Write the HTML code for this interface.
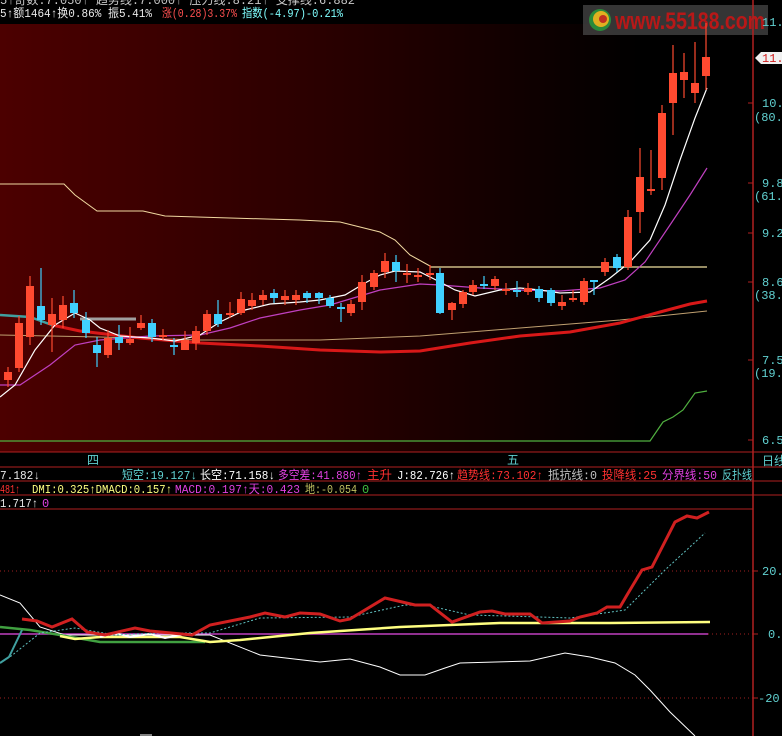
<!DOCTYPE html>
<html><head><meta charset="utf-8"><style>
html,body{margin:0;padding:0;background:#000;width:782px;height:736px;overflow:hidden}
svg{display:block}
text{font-family:"Liberation Mono","WenQuanYi Zen Hei",monospace;font-size:12px}
.cj{font-family:"Liberation Mono","Noto Sans CJK SC",monospace}
</style></head><body>
<svg width="782" height="736" viewBox="0 0 782 736" xmlns="http://www.w3.org/2000/svg">
<defs>
<linearGradient id="bg" x1="0" y1="0" x2="1" y2="0">
<stop offset="0" stop-color="#4c0000"/><stop offset="0.45" stop-color="#280000"/><stop offset="0.85" stop-color="#000"/>
</linearGradient>
</defs>
<rect x="0" y="24" width="753" height="428" fill="url(#bg)"/>
<text x="0" y="4" fill="#c8c8c8" textLength="355" lengthAdjust="spacingAndGlyphs">5↑奇数:7.050↑ 趋势线:7.000↑ 压力线:8.21↑ 支撑线:6.882</text>
<text x="0" y="17" fill="#e8e8e8" class="cj" textLength="152" lengthAdjust="spacingAndGlyphs">5↑额1464↑换0.86% 振5.41%</text>
<text x="162" y="17" fill="#ff5050" class="cj" textLength="75" lengthAdjust="spacingAndGlyphs">涨(0.28)3.37%</text>
<text x="242" y="17" fill="#80ffff" class="cj" textLength="101" lengthAdjust="spacingAndGlyphs">指数(-4.97)-0.21%</text>
<rect x="583" y="5" width="185" height="30" fill="#6a6a6a" opacity="0.5"/>
<circle cx="600" cy="20" r="11" fill="#2a8a3a"/><circle cx="601" cy="19" r="8" fill="#e0b020"/><circle cx="603" cy="19" r="4" fill="#c03020"/>
<text x="615" y="29" fill="#b81818" style="font-size:24px;font-weight:bold;font-family:'Liberation Sans',sans-serif" textLength="150" lengthAdjust="spacingAndGlyphs">www.55188.com</text>
<line x1="753" y1="0" x2="753" y2="736" stroke="#b02020" stroke-width="1.5"/>
<g fill="#60d0d0">
<text x="762" y="26">11.</text>
<text x="762" y="107">10.9</text><text x="754" y="121">(80.9</text>
<text x="762" y="187">9.8</text><text x="754" y="200">(61.8</text>
<text x="762" y="237">9.2</text>
<text x="762" y="286">8.6</text><text x="754" y="299">(38.2</text>
<text x="762" y="364">7.5</text><text x="754" y="377">(19.1</text>
<text x="762" y="444">6.5</text>
</g>
<g stroke="#b02020"><line x1="748" y1="103" x2="753" y2="103"/><line x1="748" y1="183" x2="753" y2="183"/><line x1="748" y1="233" x2="753" y2="233"/><line x1="748" y1="282" x2="753" y2="282"/><line x1="748" y1="360" x2="753" y2="360"/><line x1="748" y1="440" x2="753" y2="440"/></g>
<path d="M755 58 L761 52 L782 52 L782 64 L761 64 Z" fill="#f0f0f0"/>
<text x="762" y="62" fill="#d02020">11.5</text>
<polyline fill="none" stroke="#f0d8a0" stroke-width="1" points="0,184 64,184 75,195 97,211 143,211 165,216 230,218 300,220 340,222 380,232 395,240 410,255 430,266"/>
<line x1="430" y1="267" x2="707" y2="267" stroke="#f0e0a0" stroke-width="1.2"/>
<line x1="80" y1="319" x2="136" y2="319" stroke="#a0a0a0" stroke-width="3"/>
<polyline fill="none" stroke="#40a0a0" stroke-width="2.5" points="0,315 30,317 52,325"/>
<polyline fill="none" stroke="#c0a070" stroke-width="1" points="0,335 100,337 200,340 320,340 420,336 520,328 620,320 707,311"/>
<polyline fill="none" stroke="#d81818" stroke-width="3" points="52,325 80,331 140,338 200,343 260,346 320,350 380,352 420,351 470,343 520,336 570,332 620,323 660,312 690,304 707,301"/>
<polyline fill="none" stroke="#c040c0" stroke-width="1.2" points="0,385 20,385 50,365 75,345 100,340 150,336 200,335 230,328 260,318 300,310 330,305 360,296 380,290 420,284 440,285 480,288 520,290 560,291 600,288 625,280 645,262 670,225 690,195 707,168"/>
<polyline fill="none" stroke="#ffffff" stroke-width="1.2" points="0,397 15,385 35,350 55,325 75,313 90,320 100,328 120,336 150,338 175,341 200,335 220,322 245,310 270,304 300,302 320,300 345,295 365,283 380,275 395,271 420,272 440,282 455,290 475,296 500,290 520,288 540,290 560,293 590,292 610,278 630,262 650,240 665,205 680,160 695,118 707,88"/>
<polyline fill="none" stroke="#50b040" stroke-width="1.2" points="0,441 650,441 663,422 673,417 683,410 695,393 707,391"/>
<g id="c"></g>
<line x1="0" y1="452" x2="782" y2="452" stroke="#b02020"/>
<line x1="0" y1="467" x2="782" y2="467" stroke="#b02020"/>
<text x="87" y="464" fill="#60d0d0" class="cj">四</text>
<text x="507" y="464" fill="#60d0d0" class="cj">五</text>
<text x="762" y="465" fill="#60d0d0" class="cj">日线</text>
<g class="cj">
<text x="0" y="479" fill="#e8e8e8" textLength="40" lengthAdjust="spacingAndGlyphs">7.182↓</text>
<text x="122" y="479" fill="#60d0d0" textLength="75" lengthAdjust="spacingAndGlyphs">短空:19.127↓</text>
<text x="200" y="479" fill="#ffffff" textLength="75" lengthAdjust="spacingAndGlyphs">长空:71.158↓</text>
<text x="278" y="479" fill="#e040e0" textLength="84" lengthAdjust="spacingAndGlyphs">多空差:41.880↑</text>
<text x="367" y="479" fill="#ff3030" textLength="25" lengthAdjust="spacingAndGlyphs">主升</text>
<text x="397" y="479" fill="#ffffff" textLength="58" lengthAdjust="spacingAndGlyphs">J:82.726↑</text>
<text x="457" y="479" fill="#ff3030" textLength="86" lengthAdjust="spacingAndGlyphs">趋势线:73.102↑</text>
<text x="548" y="479" fill="#c0c0c0" textLength="49" lengthAdjust="spacingAndGlyphs">抵抗线:0</text>
<text x="602" y="479" fill="#ff3030" textLength="55" lengthAdjust="spacingAndGlyphs">投降线:25</text>
<text x="662" y="479" fill="#e040e0" textLength="55" lengthAdjust="spacingAndGlyphs">分界线:50</text>
<text x="722" y="479" fill="#60d0d0" textLength="30" lengthAdjust="spacingAndGlyphs">反扑线</text>
<text x="0" y="493" fill="#ff3030" textLength="20" lengthAdjust="spacingAndGlyphs">481↑</text>
<text x="32" y="493" fill="#ffff80" textLength="140" lengthAdjust="spacingAndGlyphs">DMI:0.325↑DMACD:0.157↑</text>
<text x="175" y="493" fill="#e040e0" textLength="125" lengthAdjust="spacingAndGlyphs">MACD:0.197↑天:0.423</text>
<text x="305" y="493" fill="#c0c060" textLength="52" lengthAdjust="spacingAndGlyphs">地:-0.054</text>
<text x="362" y="493" fill="#40c040">0</text>
<text x="0" y="507" fill="#e8e8e8" textLength="38" lengthAdjust="spacingAndGlyphs">1.717↑</text>
<text x="42" y="507" fill="#e040e0">0</text>
</g>
<line x1="0" y1="481" x2="782" y2="481" stroke="#b02020"/>
<line x1="0" y1="495" x2="782" y2="495" stroke="#b02020"/>
<line x1="0" y1="509" x2="753" y2="509" stroke="#b02020"/>
<g stroke="#a02020" stroke-dasharray="1,3"><line x1="0" y1="571" x2="753" y2="571"/><line x1="0" y1="634" x2="753" y2="634"/><line x1="0" y1="698" x2="753" y2="698"/></g>
<g fill="#60d0d0"><text x="762" y="575">20.0</text><text x="768" y="638">0.0</text><text x="758" y="702">-20.0</text></g>
<g stroke="#b02020"><line x1="753" y1="571" x2="758" y2="571"/><line x1="753" y1="634" x2="758" y2="634"/><line x1="753" y1="698" x2="758" y2="698"/></g>
<line x1="0" y1="634" x2="708" y2="634" stroke="#c040c0" stroke-width="1.5"/>
<polyline fill="none" stroke="#ffffff" stroke-width="1" points="0,595 20,603 40,627 65,635 210,635 260,655 320,662 350,659 380,667 400,675 425,675 445,668 460,663 530,661 565,653 590,657 615,663 635,675 650,690 670,712 695,736"/>
<polyline fill="none" stroke="#40a040" stroke-width="2.5" points="0,627 30,630 60,635 100,642 120,642 205,642"/>
<polyline fill="none" stroke="#ffff80" stroke-width="2.5" points="60,636 75,639 100,637 140,637 180,637 210,642 240,640 310,633 400,627 500,623 550,623 610,623 710,622"/>
<polyline fill="none" stroke="#ffffff" stroke-width="2" points="100,637 115,633 130,637 150,634 165,638 175,636 185,634 195,634"/>
<polyline fill="none" stroke="#60c0c0" stroke-width="1" stroke-dasharray="2,2" points="0,663 10,657 40,633 75,628 115,635 160,633 210,633 260,618 350,617 405,605 430,606 470,615 540,617 570,618 625,610 665,570 705,533"/>
<polyline fill="none" stroke="#40a0a0" stroke-width="2" points="0,663 9,657 22,630"/>
<polyline fill="none" stroke="#d02020" stroke-width="3" points="22,619 37,621 52,627 72,619 87,632 105,635 135,628 150,631 192,635 210,625 250,617 265,613 285,617 300,613 320,614 340,621 350,619 385,598 415,605 430,605 452,622 480,612 492,611 505,614 530,614 542,623 570,621 580,617 597,613 607,607 620,607 627,595 642,570 652,567 675,522 687,516 697,518 709,512"/>
<line x1="140" y1="735" x2="152" y2="735" stroke="#fff"/>
</svg>
<script>
var R="#ff4a30",C="#40d0ff";
var d=[[8,372,380,367,387,R],[19,323,368,316,372,R],[30,286,337,276,345,R],[41,306,320,268,325,C],[52,314,325,298,352,R],[63,305,320,296,328,R],[74,303,313,290,318,C],[86,320,333,312,338,C],[97,345,353,337,367,C],[108,338,355,330,358,R],[119,337,343,325,350,C],[130,339,343,327,345,R],[141,323,328,315,330,R],[152,323,337,319,342,C],[163,335,337,329,340,R],[174,345,347,338,355,C],[185,340,350,331,350,R],[196,331,343,326,350,R],[207,314,331,310,335,R],[218,314,324,300,327,C],[230,313,315,302,318,R],[241,299,313,292,315,R],[252,300,306,293,310,R],[263,295,300,290,305,R],[274,293,298,289,303,C],[285,296,300,290,305,R],[296,295,300,290,305,R],[307,293,298,291,303,C],[319,293,298,292,304,C],[330,298,306,295,308,C],[341,307,309,303,322,C],[351,304,313,300,316,R],[362,282,302,275,310,R],[374,273,287,270,290,R],[385,261,272,253,278,R],[396,262,271,255,282,C],[407,273,275,264,283,R],[418,275,277,268,282,R],[430,273,275,265,280,R],[440,273,313,268,314,C],[452,303,310,302,320,R],[463,292,304,290,308,R],[473,285,292,280,295,R],[484,284,286,276,289,C],[495,279,286,276,290,R],[506,289,291,283,295,R],[517,290,291,281,297,C],[528,288,292,283,295,R],[539,289,298,286,302,C],[551,290,303,288,306,C],[562,302,306,295,310,R],[573,298,300,290,302,R],[584,281,302,278,305,R],[594,280,282,280,295,C],[605,262,272,258,276,R],[617,257,268,254,272,C],[628,217,267,210,270,R],[640,177,212,148,233,R],[651,189,191,150,195,R],[662,113,178,105,190,R],[673,73,103,45,135,R],[684,72,80,53,98,R],[695,83,93,42,103,R],[706,57,76,23,90,R]];
var s="";d.forEach(function(a){s+='<line x1="'+a[0]+'" y1="'+a[3]+'" x2="'+a[0]+'" y2="'+a[4]+'" stroke="'+a[5]+'" stroke-width="1.2"/>';s+='<rect x="'+(a[0]-4)+'" y="'+a[1]+'" width="8" height="'+Math.max(2,a[2]-a[1])+'" fill="'+a[5]+'"/>';});
document.getElementById("c").innerHTML=s;
</script>
</body></html>
